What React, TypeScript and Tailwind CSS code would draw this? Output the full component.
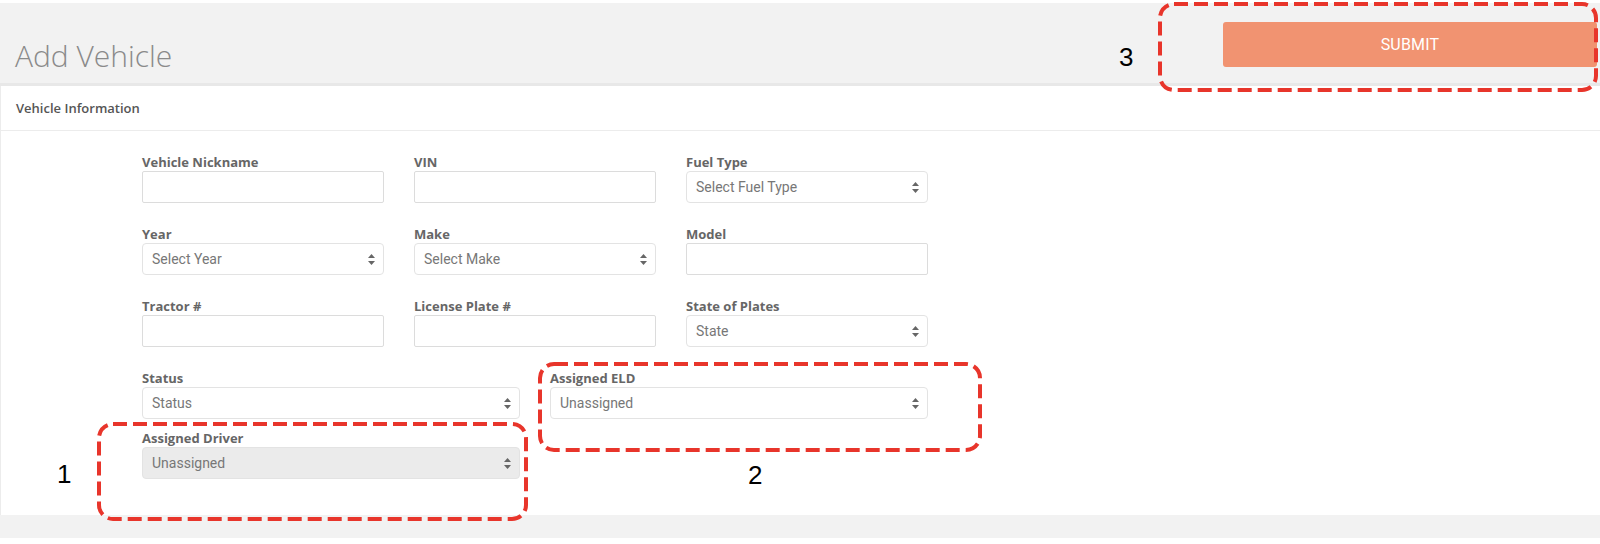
import React from "react";

function Arrows() {
  return (
    <svg width="7" height="11" viewBox="0 0 7 11" className="shrink-0">
      <polygon points="3.5,0 7,4 0,4" fill="#666" />
      <polygon points="0,7 7,7 3.5,11" fill="#666" />
    </svg>
  );
}

function Label({ children }: { children: React.ReactNode }) {
  return (
    <div className="h-[18px] leading-[18px] text-[13px] font-bold text-[#666] font-['Open_Sans',sans-serif] whitespace-nowrap">
      {children}
    </div>
  );
}

function TextInput() {
  return <div className="h-8 rounded-[2px] border border-[#dcdcdc] bg-white" />;
}

function Select({ text, disabled }: { text: string; disabled?: boolean }) {
  return (
    <div
      className={`h-8 rounded-[4px] border border-[#e3e3e3] flex items-center justify-between pl-[9px] pr-[8px] text-[14px] text-[#777] font-['Roboto',sans-serif] ${
        disabled ? "bg-[#ebebeb]" : "bg-white"
      }`}
    >
      <span>{text}</span>
      <Arrows />
    </div>
  );
}

function Field({ label, children }: { label: string; children: React.ReactNode }) {
  return (
    <div className="flex flex-col">
      <Label>{label}</Label>
      {children}
    </div>
  );
}

function DashBox({ w, h }: { w: number; h: number }) {
  return (
    <svg width={w} height={h} className="block">
      <rect
        x={2}
        y={2}
        width={w - 4}
        height={h - 4}
        rx={14}
        ry={14}
        fill="none"
        stroke="#e8352b"
        strokeWidth={4}
        strokeDasharray="14 6"
      />
    </svg>
  );
}

export default function App() {
  return (
    <div className="relative w-[1600px] h-[544px] bg-white overflow-hidden font-['Open_Sans',sans-serif]">
      <div className="h-[3px] bg-white" />
      {/* Header */}
      <header className="h-[83px] bg-[#f2f2f2] border-b-[3px] border-[#e8e8e8] flex items-start justify-between pl-[15px] pr-[3px]">
        <h1 className="mt-[35px] text-[30px] leading-[36px] font-light text-[#8a8a8a] font-['Open_Sans',sans-serif]">
          Add Vehicle
        </h1>
        <button className="mt-[19px] w-[374px] h-[45px] rounded-[3px] bg-[#f19371] text-white text-[16px] font-['Roboto',sans-serif] tracking-[0.2px]">
          SUBMIT
        </button>
      </header>

      {/* Panel */}
      <section className="h-[429px] bg-white border-l border-[#ececec]">
        <div className="h-[45px] pt-[13px] pl-[15px] border-b border-[#ececec] text-[13px] leading-[18px] font-semibold text-[#555]">
          Vehicle Information
        </div>
        <div className="pl-[141px] pt-[22px] w-[927px]">
          <div className="grid grid-cols-3 gap-x-[30px] gap-y-[22px]">
            <Field label="Vehicle Nickname">
              <TextInput />
            </Field>
            <Field label="VIN">
              <TextInput />
            </Field>
            <Field label="Fuel Type">
              <Select text="Select Fuel Type" />
            </Field>
            <Field label="Year">
              <Select text="Select Year" />
            </Field>
            <Field label="Make">
              <Select text="Select Make" />
            </Field>
            <Field label="Model">
              <TextInput />
            </Field>
            <Field label="Tractor #">
              <TextInput />
            </Field>
            <Field label="License Plate #">
              <TextInput />
            </Field>
            <Field label="State of Plates">
              <Select text="State" />
            </Field>
          </div>
          <div className="mt-[22px] grid grid-cols-2 gap-x-[30px]">
            <div className="flex flex-col gap-[10px]">
              <Field label="Status">
                <Select text="Status" />
              </Field>
              <Field label="Assigned Driver">
                <Select text="Unassigned" disabled />
              </Field>
            </div>
            <div>
              <Field label="Assigned ELD">
                <Select text="Unassigned" />
              </Field>
            </div>
          </div>
        </div>
      </section>

      {/* Footer strip */}
      <div className="h-[23px] bg-[#f2f2f2]" />

      {/* Annotations */}
      <div className="absolute left-[1158px] top-[2px]">
        <DashBox w={440} h={90} />
      </div>
      <div className="absolute left-[97px] top-[422px]">
        <DashBox w={431} h={99} />
      </div>
      <div className="absolute left-[538px] top-[362px]">
        <DashBox w={444} h={90} />
      </div>
      <div className="absolute left-[1119px] top-[42px] text-[26px] leading-[30px] text-black font-['Liberation_Sans',sans-serif]">
        3
      </div>
      <div className="absolute left-[57px] top-[459px] text-[26px] leading-[30px] text-black font-['Liberation_Sans',sans-serif]">
        1
      </div>
      <div className="absolute left-[748px] top-[460px] text-[26px] leading-[30px] text-black font-['Liberation_Sans',sans-serif]">
        2
      </div>
    </div>
  );
}
